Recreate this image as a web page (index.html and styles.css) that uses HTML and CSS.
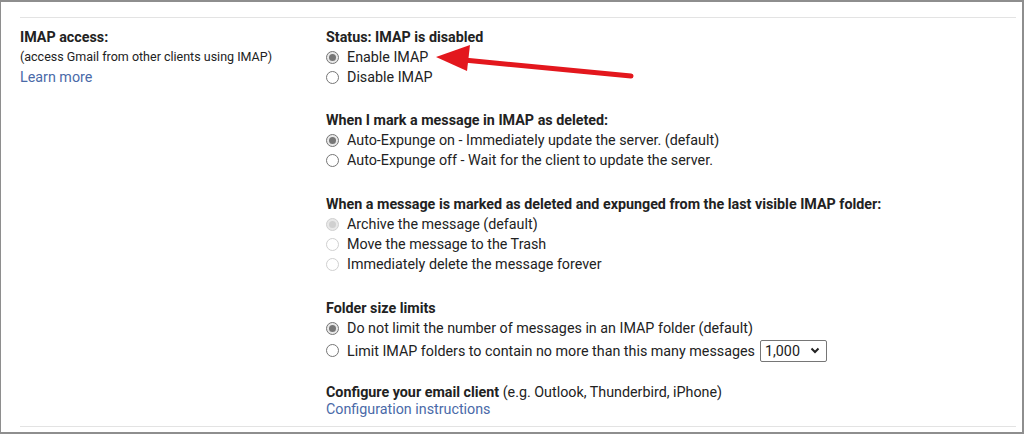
FILE: index.html
```html
<!DOCTYPE html>
<html lang="en">

<head>
  <meta charset="UTF-8" />
  <title>Settings - IMAP access</title>
  <link rel="stylesheet" href="styles.css">
</head>

<body>
  <div class="frame">
    <div class="setting">
      <div class="label-col">
        <div class="label-title">IMAP access:</div>
        <div class="label-note">(access Gmail from other clients using IMAP)</div>
        <a class="link" href="#">Learn more</a>
      </div>

      <div class="content-col">
        <div class="group">
          <div class="group-title">Status: IMAP is disabled</div>
          <div class="option"><span class="radio on"></span>Enable IMAP</div>
          <div class="option"><span class="radio"></span>Disable IMAP</div>
        </div>

        <div class="group">
          <div class="group-title">When I mark a message in IMAP as deleted:</div>
          <div class="option"><span class="radio on"></span>Auto-Expunge on - Immediately update the server. (default)</div>
          <div class="option"><span class="radio"></span>Auto-Expunge off - Wait for the client to update the server.</div>
        </div>

        <div class="group">
          <div class="group-title">When a message is marked as deleted and expunged from the last visible IMAP folder:</div>
          <div class="option disabled"><span class="radio on"></span>Archive the message (default)</div>
          <div class="option disabled"><span class="radio"></span>Move the message to the Trash</div>
          <div class="option disabled"><span class="radio"></span>Immediately delete the message forever</div>
        </div>

        <div class="group before-last">
          <div class="group-title">Folder size limits</div>
          <div class="option"><span class="radio on"></span>Do not limit the number of messages in an IMAP folder (default)</div>
          <div class="option option-select">
            <span class="radio"></span>Limit IMAP folders to contain no more than this many messages
            <span class="select">1,000
              <svg width="10" height="7" viewBox="0 0 10 7"><path d="M1.5 1.5 L5 5 L8.5 1.5" fill="none" stroke="#222" stroke-width="2" /></svg>
            </span>
          </div>
        </div>

        <div class="group last">
          <div class="client"><b>Configure your email client</b> (e.g. Outlook, Thunderbird, iPhone)</div>
          <a class="link tight" href="#">Configuration instructions</a>
        </div>
      </div>
    </div>

    <svg class="arrow" width="1024" height="435" viewBox="0 0 1024 435">
      <line x1="464" y1="60" x2="631" y2="76" stroke="#e3171d" stroke-width="5" stroke-linecap="round" />
      <polygon points="436,57 470,45 467,71" fill="#e3171d" />
    </svg>
  </div>
</body>

</html>
```

FILE: styles.css
```css
body {
  margin: 0;
  background: #fff;
  font-family: Roboto, "Liberation Sans", Arial, sans-serif;
  font-size: 14.3px;
  color: #222;
}

.frame {
  position: relative;
  box-sizing: border-box;
  width: 1024px;
  height: 434px;
  border: 2px solid #8e8e8e;
  border-left-width: 1px;
  padding: 15px 6px 0 19px;
}

.setting {
  display: flex;
  border-top: 1px solid #e3e3e3;
  border-bottom: 1px solid #e3e3e3;
  padding: 9px 0 8px;
}

.label-col {
  width: 306px;
  flex-shrink: 0;
}

.label-title {
  font-weight: bold;
  line-height: 20px;
}

.label-note {
  font-size: 12.5px;
  line-height: 20px;
}

.link {
  color: #4a6aa8;
  text-decoration: none;
  line-height: 20px;
  display: block;
}

.link.tight {
  line-height: 17px;
}

.content-col {
  flex: 1;
}

.group {
  margin-bottom: 24px;
}

.group:first-child {
  margin-bottom: 23px;
}

.group.before-last {
  margin-bottom: 21px;
}

.group.last {
  margin-bottom: 0;
}

.group-title {
  font-weight: bold;
  line-height: 20px;
}

.option {
  display: flex;
  align-items: center;
  line-height: 20px;
}

.option.disabled .radio {
  border-color: #d0d0d0;
}

.option.disabled .radio.on::after {
  background: #d0d0d0;
}

.option-select {
  height: 23px;
  margin-top: 1px;
}

.radio {
  position: relative;
  box-sizing: border-box;
  width: 13px;
  height: 13px;
  border: 1px solid #767676;
  border-radius: 50%;
  margin-right: 8px;
  background: #fff;
}

.radio.on {
  background: #e8e8e8;
}

.radio.on::after {
  content: "";
  position: absolute;
  left: 2px;
  top: 2px;
  width: 7px;
  height: 7px;
  border-radius: 50%;
  background: #767676;
}

.select {
  display: inline-flex;
  align-items: center;
  justify-content: space-between;
  box-sizing: border-box;
  width: 67px;
  height: 22px;
  margin-left: 5px;
  padding: 0 6px 0 4px;
  border: 1px solid #767676;
  border-radius: 2px;
}

.client {
  line-height: 18px;
}

.arrow {
  position: absolute;
  left: -1px;
  top: -2px;
  pointer-events: none;
}
```
